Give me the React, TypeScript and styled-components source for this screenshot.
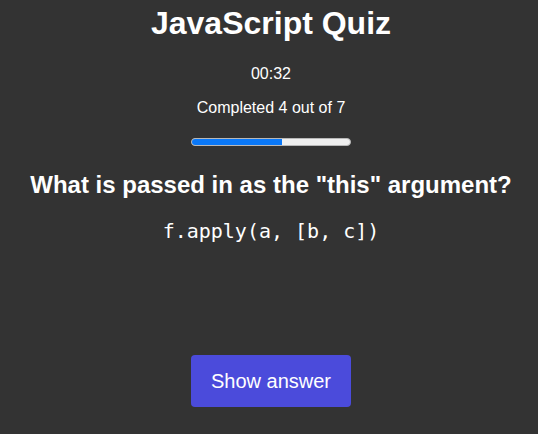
import React from "react";
import styled, { createGlobalStyle } from "styled-components";

const Global = createGlobalStyle`
  html, body { margin: 0; padding: 0; background: #333333; }
  body { font-family: "Liberation Sans", Arial, sans-serif; color: #ffffff; }
`;

const Page = styled.main`
  min-height: 434px;
  display: flex;
  flex-direction: column;
  align-items: center;
  text-align: center;
  padding: 5px 0 0 4px;
  box-sizing: border-box;
`;

const Title = styled.h1`
  margin: 0;
  font-size: 32px;
  font-weight: 700;
  line-height: 37px;
`;

const Info = styled.p<{ $gap: number }>`
  margin: ${(p) => p.$gap}px 0 0;
  font-size: 16px;
  line-height: 18px;
`;

const Track = styled.div`
  margin-top: 21px;
  width: 160px;
  height: 8px;
  box-sizing: border-box;
  background: #efefef;
  border: 1px solid #b8b8b8;
  border-radius: 4px;
  overflow: hidden;
  display: flex;
`;

const Fill = styled.div`
  background: #0a78f8;
  border-radius: 3px 0 0 3px;
  margin: -1px 0 -1px -1px;
  height: 8px;
`;

const Question = styled.h2`
  margin: 25px 0 0;
  font-size: 24px;
  font-weight: 700;
  line-height: 28px;
`;

const Code = styled.code`
  margin-top: 21px;
  font-family: "DejaVu Sans Mono", monospace;
  font-size: 20px;
  line-height: 23px;
`;

const Button = styled.button`
  margin-top: 112px;
  width: 160px;
  height: 52px;
  border: none;
  border-radius: 4px;
  background: #4b4bdb;
  color: #ffffff;
  font-family: "Liberation Sans", Arial, sans-serif;
  font-size: 20px;
  cursor: pointer;
`;

export default function App() {
  const done = 4;
  const total = 7;
  return (
    <>
      <Global />
      <Page>
        <Title>JavaScript Quiz</Title>
        <Info $gap={23}>00:32</Info>
        <Info $gap={16}>
          Completed {done} out of {total}
        </Info>
        <Track>
          <Fill style={{ width: `${(done / total) * 160}px` }} />
        </Track>
        <Question>What is passed in as the "this" argument?</Question>
        <Code>f.apply(a, [b, c])</Code>
        <Button>Show answer</Button>
      </Page>
    </>
  );
}
